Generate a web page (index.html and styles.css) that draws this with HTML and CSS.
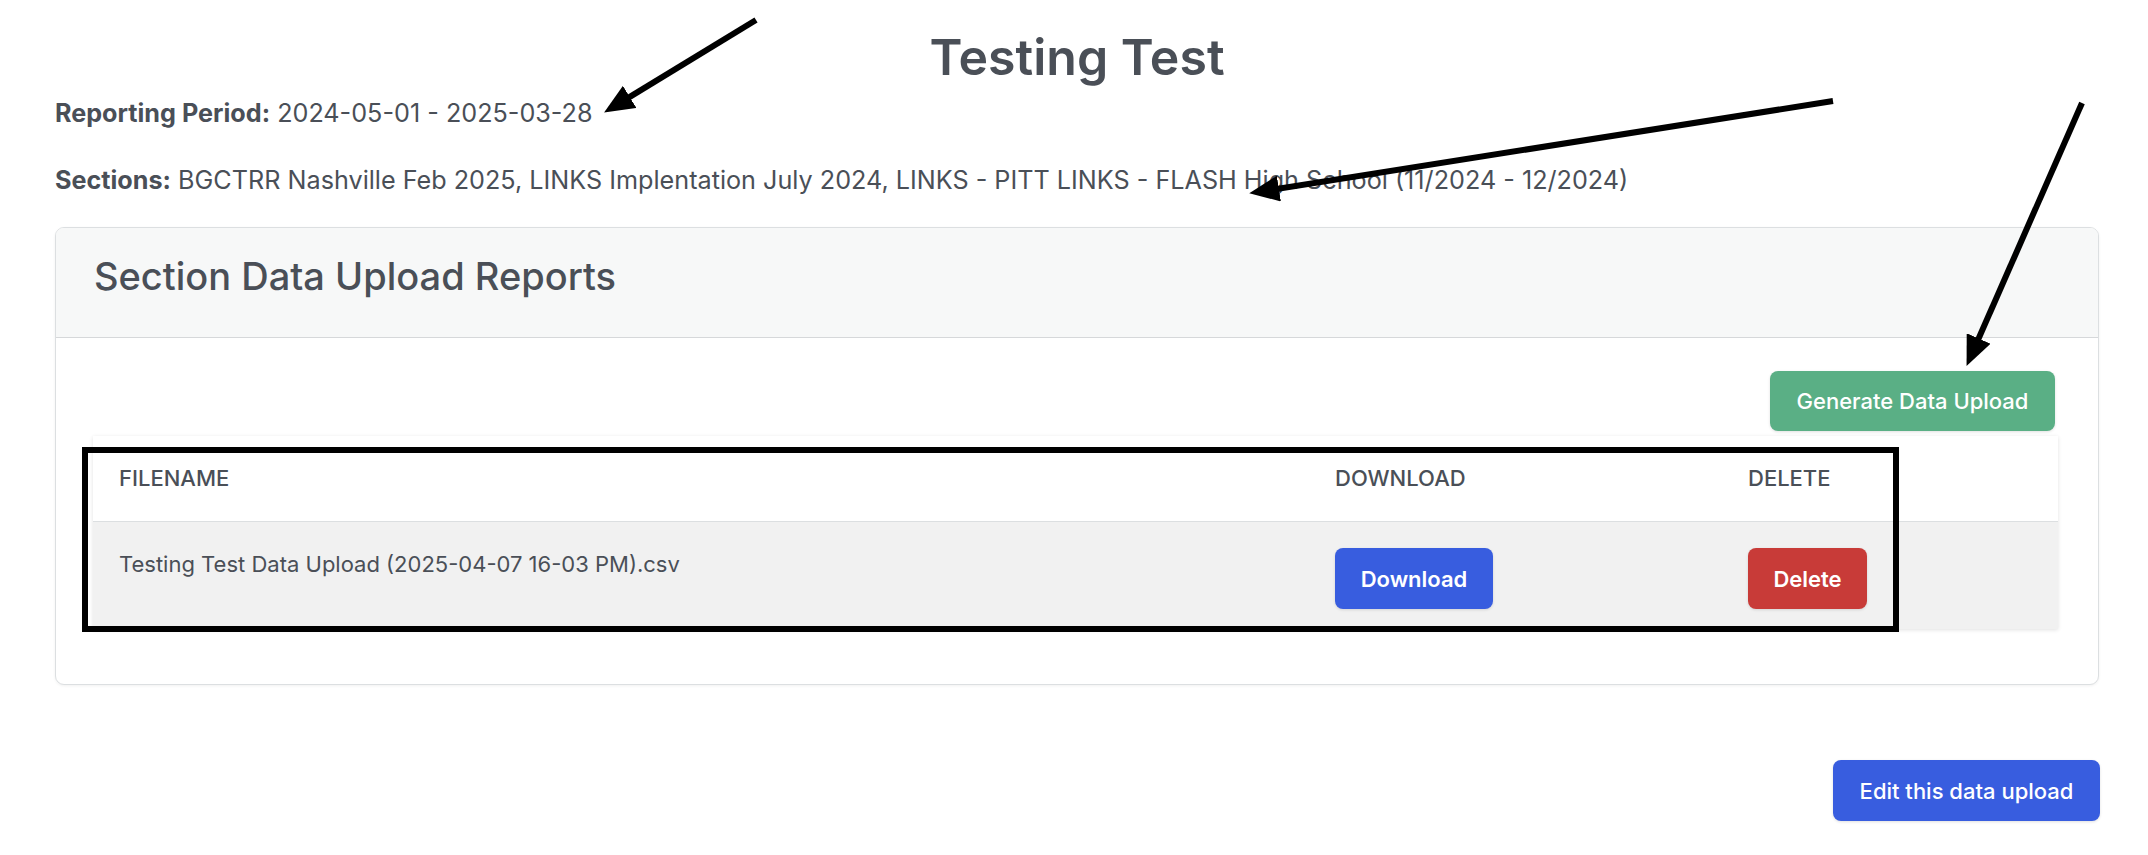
FILE: index.html
```html
<!DOCTYPE html>
<html lang="en">
<head>
<meta charset="utf-8">
<title>Testing Test</title>
<link rel="stylesheet" href="styles.css">
</head>
<body>
<div class="page">
  <h1 class="title">Testing Test</h1>
  <p class="meta"><strong>Reporting Period:</strong> 2024-05-01 - 2025-03-28</p>
  <p class="meta meta-sections"><strong>Sections:</strong> BGCTRR Nashville Feb 2025, LINKS Implentation July 2024, LINKS - PITT LINKS - FLASH High School (11/2024 - 12/2024)</p>

  <section class="card">
    <div class="card-header">
      <h2 class="card-title">Section Data Upload Reports</h2>
    </div>
    <div class="card-body">
      <div class="actions">
        <button class="btn btn-green" type="button">Generate Data Upload</button>
      </div>
      <table class="reports">
        <colgroup>
          <col class="col-file">
          <col class="col-dl">
          <col class="col-del">
        </colgroup>
        <thead>
          <tr>
            <th>FILENAME</th>
            <th>DOWNLOAD</th>
            <th>DELETE</th>
          </tr>
        </thead>
        <tbody>
          <tr>
            <td>Testing Test Data Upload (2025-04-07 16-03 PM).csv</td>
            <td><button class="btn btn-blue btn-dl" type="button">Download</button></td>
            <td><button class="btn btn-red btn-del" type="button">Delete</button></td>
          </tr>
        </tbody>
      </table>
    </div>
  </section>

  <div class="footer-actions">
    <button class="btn btn-blue btn-edit" type="button">Edit this data upload</button>
  </div>
</div>

<svg class="annotations" width="2148" height="855" viewBox="0 0 2148 855" aria-hidden="true">
  <defs>
    <marker id="ah" markerUnits="userSpaceOnUse" viewBox="0 0 30 26" markerWidth="30" markerHeight="26" refX="9" refY="13" orient="auto">
      <path d="M0,0 L30,13 L0,26 z" fill="#000"/>
    </marker>
  </defs>
  <line x1="756" y1="20" x2="622" y2="101.6" stroke="#000" stroke-width="6" marker-end="url(#ah)"/>
  <line x1="1833" y1="101" x2="1270" y2="190" stroke="#000" stroke-width="6" marker-end="url(#ah)"/>
  <line x1="2082" y1="103" x2="1975" y2="346.7" stroke="#000" stroke-width="6" marker-end="url(#ah)"/>
  <rect x="85" y="450" width="1811" height="179" fill="none" stroke="#000" stroke-width="6"/>
</svg>
</body>
</html>
```

FILE: styles.css
```css
* { box-sizing: border-box; }

html, body {
  margin: 0;
  padding: 0;
  background: #ffffff;
}

body {
  font-family: Inter, "Noto Sans", "Liberation Sans", sans-serif;
  color: #4a4f57;
  position: relative;
  width: 2148px;
  height: 855px;
  overflow: hidden;
}

.page {
  padding: 0 49px 0 55px;
}

.title {
  margin: 27px 0 8px;
  font-size: 50px;
  line-height: 60px;
  font-weight: 600;
  text-align: center;
  color: #4a4f57;
}

.meta {
  margin: 0 0 31px;
  font-size: 25.2px;
  line-height: 36px;
}

.meta strong { font-weight: 700; }

.meta-sections { margin-bottom: 29px; }

.card {
  border: 1px solid #dcdfe1;
  border-radius: 9px;
  background: #fff;
  box-shadow: 0 1px 3px rgba(0,0,0,0.06);
  overflow: hidden;
}

.card-header {
  background: #f7f8f8;
  border-bottom: 1px solid #d6d8da;
  padding: 26px 38px 36px;
  height: 110px;
}

.card-title {
  margin: 0;
  font-size: 38px;
  line-height: 1.2;
  font-weight: 500;
  color: #4a4f57;
}

.card-body {
  padding: 33px 40px 55px 37px;
}

.actions {
  display: flex;
  justify-content: flex-end;
  margin-bottom: 5px;
}

.btn {
  font-family: Inter, "Noto Sans", "Liberation Sans", sans-serif;
  border: 0;
  border-radius: 8px;
  color: #fff;
  font-weight: 600;
  font-size: 22px;
  line-height: 1;
  display: inline-flex;
  align-items: center;
  justify-content: center;
  vertical-align: top;
  box-shadow: 0 1px 3px rgba(0,0,0,0.12);
}

.btn-green {
  background: #5aaf85;
  height: 60px;
  width: 285px;
  margin-right: 3px;
  font-weight: 500;
}

.btn-blue { background: #385ddf; }
.btn-red { background: #c83b38; }

.btn-dl { width: 158px; height: 61px; }
.btn-del { width: 119px; height: 61px; }

.reports {
  width: 100%;
  border-collapse: collapse;
  table-layout: fixed;
  box-shadow: 0 1px 4px rgba(0,0,0,0.12);
  font-size: 22px;
}

.col-file { width: 1216px; }
.col-dl { width: 413px; }

.reports th {
  text-align: left;
  font-weight: 500;
  line-height: 33px;
  padding: 26px 26px 26px;
  background: #fff;
  border-bottom: 1px solid #dcdfe1;
  color: #4a4f57;
}

.reports td {
  vertical-align: top;
  line-height: 33px;
  padding: 26px 26px 20px;
  background: #f1f1f1;
  color: #4a4f57;
}

.footer-actions {
  display: flex;
  justify-content: flex-end;
  margin-top: 75px;
  margin-right: -1px;
}

.btn-edit {
  width: 267px;
  height: 61px;
  font-weight: 500;
}

.annotations {
  position: absolute;
  top: 0;
  left: 0;
  pointer-events: none;
}
```
